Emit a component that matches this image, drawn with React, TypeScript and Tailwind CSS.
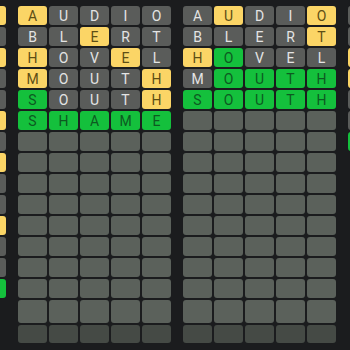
import React from 'react';

type Mark = 'G' | 'Y' | 'B';

const GUESSES = [
    'AUDIO', 'BLERT', 'HOVEL', 'MOUTH', 'SOUTH', 'SHAME', 'PLANT',
    'GRIME', 'FOCUS', 'WHIRL', 'STACK', 'DINGY', 'CLOTH', 'TOAST',
];

// Height of each guess row; the 15th row is drawn a bit taller.
const ROW_H = [
    'h-[19px]', 'h-[19px]', 'h-[19px]', 'h-[19px]', 'h-[19px]', 'h-[19px]', 'h-[19px]', 'h-[19px]',
    'h-[19px]', 'h-[19px]', 'h-[19px]', 'h-[19px]', 'h-[19px]', 'h-[19px]', 'h-[23px]', 'h-[18px]',
];

interface BoardData {
    marks: string[];
    showEmpty: boolean;
}

// Boards 1 and 4 are scrolled almost out of view.
const BOARDS: BoardData[] = [
    {
        marks: [
            'BBBBY', 'BBBBB', 'BBBBY', 'BBBBB', 'BBBBB', 'BBBBY', 'BBBBB',
            'BBBBY', 'BBBBB', 'BBBBB', 'BBBBY', 'BBBBB', 'BBBBB', 'GGGGG',
        ],
        showEmpty: false,
    },
    {
        marks: ['YBBBB', 'BBYBB', 'YBBYB', 'YBBBY', 'GBBBY', 'GGGGG'],
        showEmpty: true,
    },
    {
        marks: ['BYBBY', 'BBBBY', 'YGBBB', 'BGGGG', 'GGGGG'],
        showEmpty: true,
    },
    {
        marks: ['BBBBB', 'BBBBB', 'YBBBB', 'YBBBB', 'BBBBB', 'BBBBB', 'GGGGG'],
        showEmpty: false,
    },
];

const tileStyle: Record<Mark, string> = {
    G: 'bg-[#14c03c] text-[#0d5a21]',
    Y: 'bg-[#fbd566] text-[#5e4e15]',
    B: 'bg-[#5a5c5a] text-[#e4e4e4]',
};

const Board: React.FC<{ board: BoardData }> = ({ board }) => (
    <div className="flex flex-col gap-[2px] shrink-0 w-[153px]">
        {ROW_H.map((h, r) => {
            const marks = board.marks[r];
            const word = GUESSES[r];
            const isLast = r === ROW_H.length - 1;
            return (
                <div key={r} className={`flex gap-[2px] ${h}`}>
                    {[0, 1, 2, 3, 4].map((c) => {
                        if (marks) {
                            const m = marks[c] as Mark;
                            return (
                                <div
                                    key={c}
                                    className={`w-[29px] h-full rounded-[3px] flex items-center justify-center text-[14px] leading-none ${tileStyle[m]}`}
                                >
                                    {word[c]}
                                </div>
                            );
                        }
                        if (!board.showEmpty) return <div key={c} className="w-[29px] h-full" />;
                        return (
                            <div
                                key={c}
                                className={`w-[29px] h-full rounded-[3px] ${isLast ? 'bg-[#454a45]' : 'bg-[#5b615b]'}`}
                            />
                        );
                    })}
                </div>
            );
        })}
    </div>
);

export default function App() {
    return (
        <div
            className="w-[350px] h-[350px] overflow-hidden bg-[#1b1c1e] pt-[6px]"
            style={{ fontFamily: 'Roboto, "Liberation Sans", sans-serif' }}
        >
            <div className="flex gap-[12px] ml-[-147px]">
                {BOARDS.map((b, i) => (
                    <Board key={i} board={b} />
                ))}
            </div>
        </div>
    );
}
